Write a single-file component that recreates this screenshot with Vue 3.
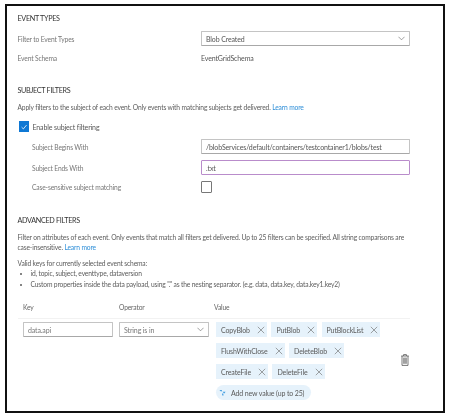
<script setup>
const chipRows = [
  ['CopyBlob', 'PutBlob', 'PutBlockList'],
  ['FlushWithClose', 'DeleteBlob'],
  ['CreateFile', 'DeleteFile'],
]
</script>

<template>
  <div class="page">
    <main class="frame">
      <h2 class="head first">EVENT TYPES</h2>
      <div class="row r-type">
        <span class="label">Filter to Event Types</span>
        <div class="field select">
          <span>Blob Created</span>
          <svg class="chev" viewBox="0 0 8 5"><path d="M.5.5 4 4 7.5.5" /></svg>
        </div>
      </div>
      <div class="row r-schema">
        <span class="label">Event Schema</span>
        <span class="value">EventGridSchema</span>
      </div>

      <h2 class="head subject">SUBJECT FILTERS</h2>
      <p class="desc">
        Apply filters to the subject of each event. Only events with matching subjects get delivered.
        <a>Learn more</a>
      </p>
      <div class="enable">
        <span class="check">
          <svg viewBox="0 0 10 10"><path d="M2 5.2 4.2 7.4 8.2 2.6" /></svg>
        </span>
        <span class="value">Enable subject filtering</span>
      </div>
      <div class="row indent r-begin">
        <span class="label">Subject Begins With</span>
        <div class="field">/blobServices/default/containers/testcontainer1/blobs/test</div>
      </div>
      <div class="row indent r-end">
        <span class="label">Subject Ends With</span>
        <div class="field focus">.txt</div>
      </div>
      <div class="row indent r-case">
        <span class="label">Case-sensitive subject matching</span>
        <span class="box"></span>
      </div>

      <h2 class="head advanced">ADVANCED FILTERS</h2>
      <p class="desc wrap">
        Filter on attributes of each event. Only events that match all filters get delivered. Up to 25 filters can be specified. All string comparisons are case-insensitive.
        <a>Learn more</a>
      </p>
      <p class="desc valid">Valid keys for currently selected event schema:</p>
      <ul class="keys">
        <li>id, topic, subject, eventtype, dataversion</li>
        <li>Custom properties inside the data payload, using "." as the nesting separator. (e.g. data, data.key, data.key1.key2)</li>
      </ul>

      <div class="grid-head">
        <span>Key</span>
        <span>Operator</span>
        <span>Value</span>
      </div>
      <div class="grid-row">
        <div class="field key">data.api</div>
        <div class="field select op">
          <span>String is in</span>
          <svg class="chev" viewBox="0 0 8 5"><path d="M.5.5 4 4 7.5.5" /></svg>
        </div>
        <div class="values">
          <div v-for="(chips, i) in chipRows" :key="i" class="chip-row">
            <span v-for="chip in chips" :key="chip" class="chip">
              {{ chip }}
              <svg viewBox="0 0 8 8"><path d="M.8.8 7.2 7.2M7.2.8.8 7.2" /></svg>
            </span>
          </div>
          <div class="add">
            <svg viewBox="0 0 8 8"><path class="blue" d="M.5 1h3L2.6 3 .5 1Z" /><path class="blue" d="M4 3h3.5L6 5.2 4 3Z" /><path class="blue" d="M3.6 5h1.4v2.6L3.6 7Z" /></svg>
            <span>Add new value (up to 25)</span>
          </div>
        </div>
        <svg class="trash" viewBox="0 0 8 12">
          <path d="M.2 2h7.6M2.6 2V.6h2.8V2M1 2v9.4h6V2M2.8 3.6v6.2M4 3.6v6.2M5.2 3.6v6.2" />
        </svg>
      </div>
    </main>
  </div>
</template>

<style>
html, body { margin: 0; background: #fff; }
</style>

<style scoped>
.page {
  width: 450px;
  height: 419px;
  padding: 4px 5px 0;
  box-sizing: border-box;
  background: #fff;
  font-family: Lato, "Open Sans", sans-serif;
  font-size: 6.7px;
  letter-spacing: -.15px;
  color: #5f5f5f;
  overflow: hidden;
}
.frame {
  width: 440px;
  height: 409px;
  box-sizing: border-box;
  border: 2px solid #111;
  padding: 0 0 0 10.5px;
  background: #fff;
  filter: blur(.3px);
}
.head {
  margin: 0;
  font-size: 7.2px;
  letter-spacing: -.3px;
  line-height: 10px;
  font-weight: 400;
  color: #333;
}
.head.first { margin-top: 8px; }
.head.subject { margin-top: 21px; }
.head.advanced { margin-top: 23px; }
.row {
  display: grid;
  grid-template-columns: 183.5px 209px;
  align-items: center;
}
.row.indent { grid-template-columns: 169px 209px; padding-left: 14.5px; }
.r-type { margin-top: 7px; height: 15px; }
.r-schema { margin-top: 5px; height: 14px; }
.r-begin { margin-top: 7px; height: 15px; }
.r-end { margin-top: 6px; height: 15px; }
.r-case { margin-top: 6px; height: 12px; }
.label { color: #777; }
.value { color: #555; font-size: 7px; letter-spacing: -.13px; }
.field {
  height: 100%;
  box-sizing: border-box;
  border: 1px solid #c4c4c4;
  border-bottom-color: #a8a8a8;
  border-radius: 1px;
  padding: 0 4px;
  display: flex;
  align-items: center;
  color: #555;
  font-size: 7px;
  letter-spacing: -.13px;
  background: #fff;
}
.focus { border-color: #b98ccb; }
.select { justify-content: space-between; }
.chev { width: 7px; height: 5px; fill: none; stroke: #666; stroke-width: .7; }
.desc { margin: 0; line-height: 10px; color: #5c5c5c; }
.desc a { color: #2f8fd8; }
.head.subject + .desc { margin-top: 6px; }
.enable {
  display: flex;
  align-items: center;
  gap: 4px;
  margin-top: 9px;
  height: 11px;
  padding-left: 1px;
}
.check {
  width: 10px;
  height: 11px;
  background: #0f78d4;
  display: flex;
  align-items: center;
  justify-content: center;
}
.check svg { width: 8px; height: 8px; fill: none; stroke: #fff; stroke-width: 1; }
.box {
  width: 11px;
  height: 12px;
  box-sizing: border-box;
  border: 1px solid #777;
  border-radius: 1px;
}
.wrap { margin-top: 6px; width: 392px; }
.valid { margin-top: 6px; }
.keys { margin: 0; padding: 0 0 0 13px; line-height: 11px; color: #5c5c5c; }
.keys li::marker { font-size: 6px; }
.grid-head {
  display: grid;
  grid-template-columns: 96px 95px 1fr;
  width: 392px;
  box-sizing: border-box;
  padding: 0 0 6px 5.5px;
  margin-top: 12px;
  line-height: 10px;
  color: #666;
  border-bottom: 1px solid #f2f2f2;
}
.grid-row {
  display: grid;
  grid-template-columns: 90px 90px 1fr auto;
  column-gap: 6px;
  width: 392px;
  box-sizing: border-box;
  padding: 3px 0 0 5.5px;
  align-items: start;
}
.grid-row .field { height: 15px; }
.key { color: #777; }
.op { color: #777; }
.values { display: flex; flex-direction: column; gap: 6px; margin-left: 1px; }
.chip-row { display: flex; gap: 4.5px; }
.chip {
  height: 15px;
  display: flex;
  align-items: center;
  gap: 7px;
  padding: 0 2px 0 5px;
  background: #e6f2fb;
  color: #5a5a5a;
  font-size: 7px;
  letter-spacing: -.13px;
}
.chip svg { width: 8px; height: 8px; fill: none; stroke: #666; stroke-width: .6; }
.add {
  height: 15px;
  width: 95px;
  box-sizing: border-box;
  display: flex;
  align-items: center;
  gap: 5px;
  padding-left: 3px;
  background: #e6f2fb;
  border-radius: 8px;
  color: #5a5a5a;
  font-size: 7px;
  letter-spacing: -.13px;
}
.add svg { width: 7px; height: 7px; }
.blue { fill: #3d9be0; }
.trash {
  width: 8px;
  height: 12px;
  margin: 32px 1px 0 0;
  fill: none;
  stroke: #555;
  stroke-width: .8;
}
</style>
